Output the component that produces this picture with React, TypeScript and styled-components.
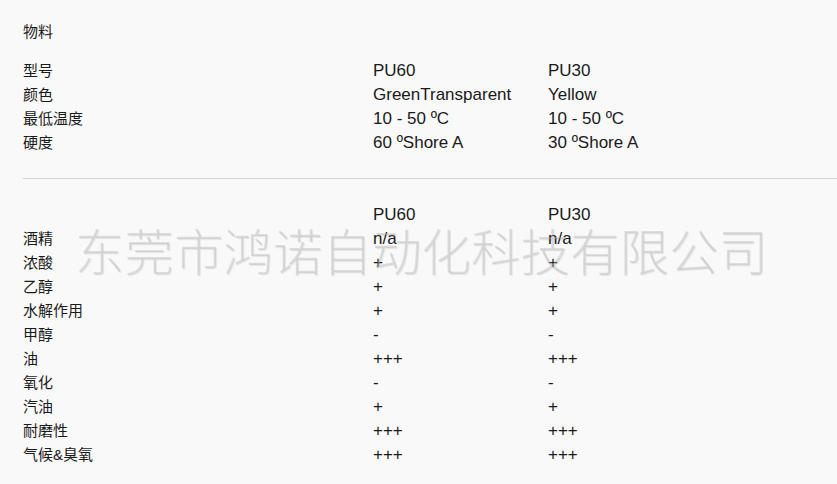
import React from 'react'
import styled, { createGlobalStyle } from 'styled-components'

const GlobalStyle = createGlobalStyle`
  html, body {
    margin: 0;
    padding: 0;
    background: #f9f9f9;
  }
  body {
    font-family: "Liberation Sans", "Noto Sans CJK SC", sans-serif;
    color: #1a1a1a;
  }
`

const Page = styled.div`
  position: relative;
  min-height: 484px;
  padding: 20px 0 0 23px;
  box-sizing: border-box;
  overflow: hidden;
`

const Heading = styled.div`
  font-size: 15px;
  line-height: 24px;
  margin-bottom: 15px;
`

const Table = styled.div`
  display: grid;
  grid-template-columns: 350px 175px 1fr;
  font-size: 17px;
  line-height: 24px;
`

const Label = styled.div`
  font-size: 15px;
`

const Cell = styled.div`
  white-space: nowrap;
`

const Divider = styled.hr`
  border: 0;
  border-top: 1px solid #d0d3d7;
  margin: 23px 0 24px 0;
`

const Watermark = styled.div`
  position: absolute;
  left: 75px;
  top: 222px;
  font-family: "Noto Sans CJK SC", sans-serif;
  font-size: 49.5px;
  font-weight: 300;
  line-height: 56px;
  color: rgba(180, 180, 180, 0.38);
  text-shadow: 1px 1px 1px rgba(0, 0, 0, 0.08);
  white-space: nowrap;
  pointer-events: none;
`

const specs = [
  ['型号', 'PU60', 'PU30'],
  ['颜色', 'GreenTransparent', 'Yellow'],
  ['最低温度', '10 - 50 ºC', '10 - 50 ºC'],
  ['硬度', '60 ºShore A', '30 ºShore A'],
]

const resistance = [
  ['', 'PU60', 'PU30'],
  ['酒精', 'n/a', 'n/a'],
  ['浓酸', '+', '+'],
  ['乙醇', '+', '+'],
  ['水解作用', '+', '+'],
  ['甲醇', '-', '-'],
  ['油', '+++', '+++'],
  ['氧化', '-', '-'],
  ['汽油', '+', '+'],
  ['耐磨性', '+++', '+++'],
  ['气候&臭氧', '+++', '+++'],
]

function Rows({ rows }: { rows: string[][] }) {
  return (
    <Table>
      {rows.map(([label, a, b], i) => (
        <React.Fragment key={i}>
          <Label>{label}</Label>
          <Cell>{a}</Cell>
          <Cell>{b}</Cell>
        </React.Fragment>
      ))}
    </Table>
  )
}

export default function App() {
  return (
    <>
      <GlobalStyle />
      <Page>
        <Heading>物料</Heading>
        <Rows rows={specs} />
        <Divider />
        <Rows rows={resistance} />
        <Watermark>东莞市鸿诺自动化科技有限公司</Watermark>
      </Page>
    </>
  )
}
